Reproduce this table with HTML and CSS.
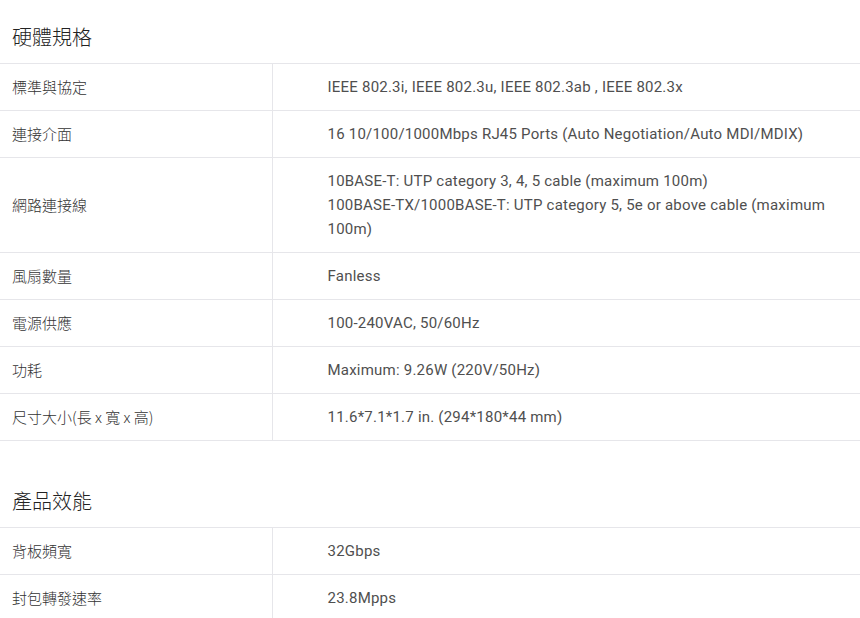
FILE: index.html
```html
<!DOCTYPE html>
<html lang="zh-Hant">
<head>
  <meta charset="UTF-8">
  <meta name="viewport" content="width=device-width, initial-scale=1.0">
  <title>規格</title>
  <link rel="stylesheet" href="styles.css">
</head>
<body>
  <!-- Hardware -->
  <section class="spec-section">
    <h2 class="spec-title">硬體規格</h2>
    <table class="spec-table">
      <tr><th>標準與協定</th><td>IEEE 802.3i, IEEE 802.3u, IEEE 802.3ab , IEEE 802.3x</td></tr>
      <tr><th>連接介面</th><td>16 10/100/1000Mbps RJ45 Ports (Auto Negotiation/Auto MDI/MDIX)</td></tr>
      <tr><th>網路連接線</th><td>10BASE-T: UTP category 3, 4, 5 cable (maximum 100m)<br>100BASE-TX/1000BASE-T: UTP category 5, 5e or above cable (maximum 100m)</td></tr>
      <tr><th>風扇數量</th><td>Fanless</td></tr>
      <tr><th>電源供應</th><td>100-240VAC, 50/60Hz</td></tr>
      <tr><th>功耗</th><td>Maximum: 9.26W (220V/50Hz)</td></tr>
      <tr><th>尺寸大小(長 x 寬 x 高)</th><td>11.6*7.1*1.7 in. (294*180*44 mm)</td></tr>
    </table>
  </section>

  <!-- Performance -->
  <section class="spec-section">
    <h2 class="spec-title">產品效能</h2>
    <table class="spec-table">
      <tr><th>背板頻寬</th><td>32Gbps</td></tr>
      <tr><th>封包轉發速率</th><td>23.8Mpps</td></tr>
    </table>
  </section>
</body>
</html>
```

FILE: styles.css
```css
* {
  margin: 0;
  padding: 0;
  box-sizing: border-box;
}

body {
  font-family: Roboto, "Noto Sans CJK TC", sans-serif;
  background: #fff;
  color: #4f4f4f;
  font-size: 15px;
}

.spec-section + .spec-section {
  margin-top: 23px;
}

.spec-title {
  font-family: "Noto Sans CJK TC", sans-serif;
  font-size: 20px;
  font-weight: 300;
  line-height: 30px;
  color: #222;
  padding: 22px 12px 11px;
}

/* Spec rows */
.spec-table {
  width: 100%;
  border-collapse: collapse;
}

.spec-table tr {
  border-top: 1px solid #e6e6ea;
  border-bottom: 1px solid #e6e6ea;
}

.spec-table th,
.spec-table td {
  text-align: left;
  font-weight: 400;
  line-height: 24px;
  padding: 11px 0;
  vertical-align: middle;
}

.spec-table th {
  width: 272px;
  padding-left: 12px;
  color: #333;
  font-family: "Noto Sans CJK TC", sans-serif;
  font-weight: 300;
  border-right: 1px solid #e6e6ea;
}

.spec-table td {
  padding-left: 55px;
  padding-right: 20px;
  letter-spacing: 0.22px;
}
```
